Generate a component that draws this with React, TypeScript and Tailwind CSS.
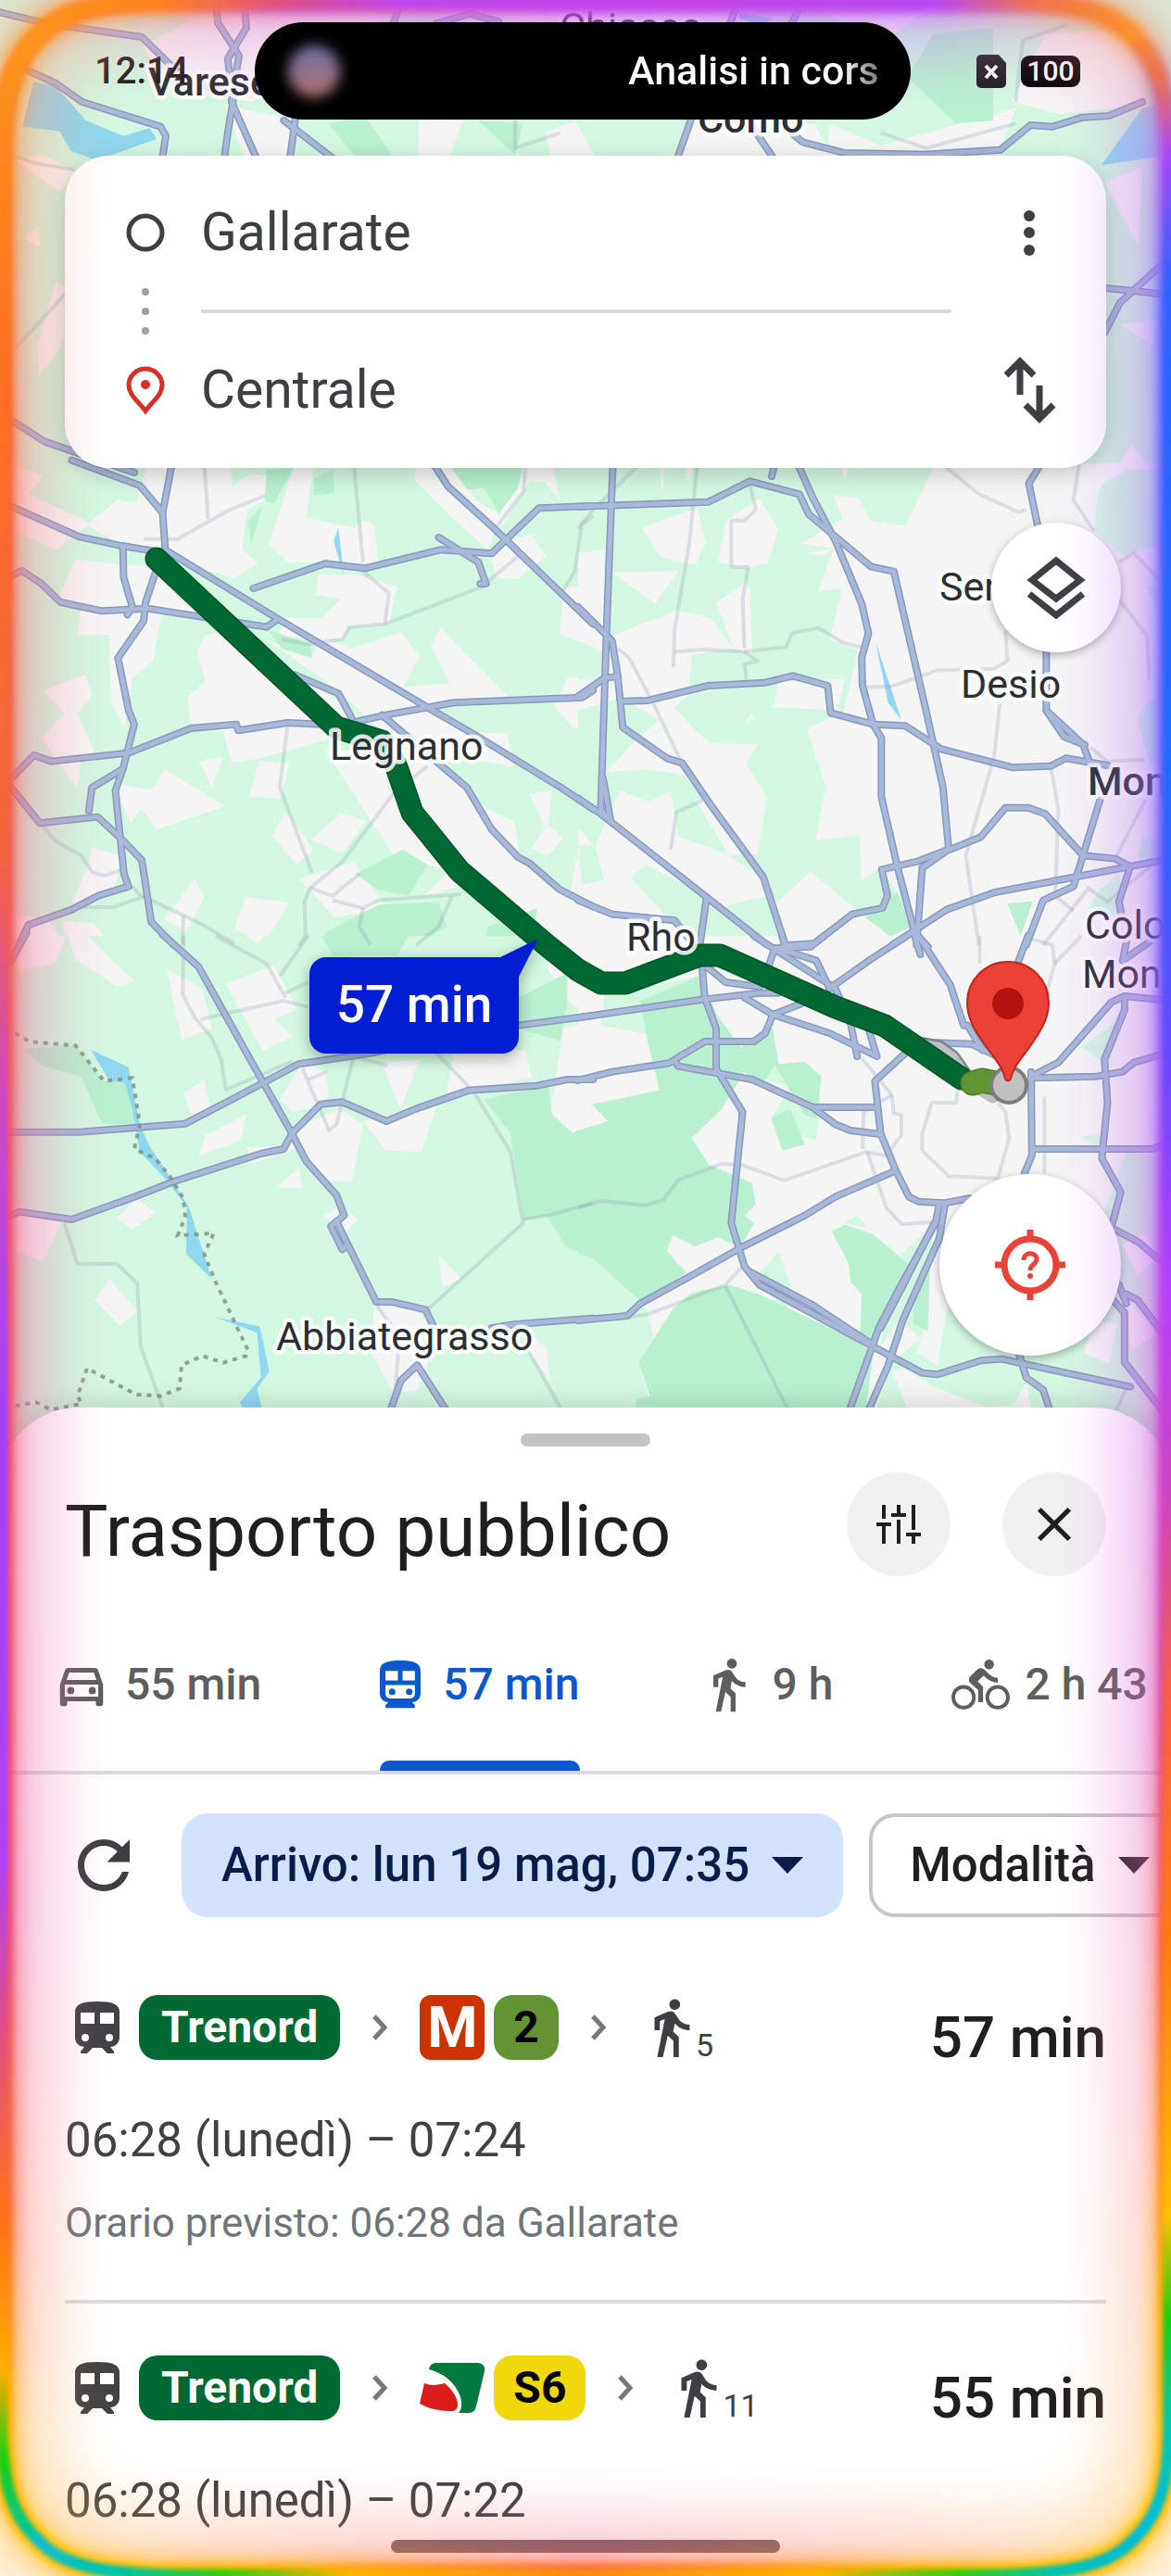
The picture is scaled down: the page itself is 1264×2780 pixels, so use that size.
import React from 'react';
import { MdClose, MdDirectionsBike, MdDirectionsWalk, MdOutlineDirectionsCar, MdRefresh } from 'react-icons/md';

interface MapTile {
  transform: string;
  base: string;
  light: string[];
  gaps: string[];
  dark: string[];
  water: string[];
  roads: string[];
  streets: string[];
}

// Each tile keeps its own grid, so shapes are written in tile units
const TILES: MapTile[] = [
  {
    transform: 'translate(0 0) scale(0.806 0.3333)',
    base: '#d2f8e1',
    light: [],
    gaps: [
      '190,150 285,30 560,30 400,160 340,330 230,290',
      '560,0 1000,0 980,90 600,90',
      '300,340 400,390 380,520 330,520',
      '1090,20 1250,20 1180,140',
      '1400,110 1540,90 1530,340 1420,370 1355,330',
      '920,390 1090,400 1120,520 900,520',
      '1110,400 1180,470 1360,350 1340,480 1250,520 1110,520',
      '560,380 620,390 600,520 560,520',
      '730,430 770,390 800,520 740,520',
      '30,770 52,735 54,800',
      '50,1120 75,910 95,940 95,1060 72,1160 52,1210',
      '20,520 60,500 100,560 80,620',
      '1480,590 1530,540 1525,800 1485,620',
      '1500,1050 1550,1035 1545,1120',
      '1500,1500 1515,1440 1540,1510',
    ],
    dark: ['1250,110 1330,90 1330,390 1280,400 1215,250', '440,400 490,380 530,520 480,520', '640,390 700,400 690,500'],
    water: [
      '45,265 75,280 115,390 165,440 200,415 210,450 130,518 95,490 80,425 30,410',
      '1570,330 1530,350 1475,535 1570,500',
      '990,40 1035,60 1020,80 990,60',
    ],
    roads: [
      '0,40 60,75 190,120 245,250 300,300',
      '30,220 75,270 110,330 215,410 222,440 217,520',
      '290,30 292,75 320,180 310,330 345,520',
      '328,30 330,90 305,190 312,330 305,430 300,520',
      '380,390 450,520',
      '395,390 388,520',
      '925,390 906,520',
      '1010,420 1038,520',
      '1060,430 1075,460 1130,495 1240,500 1340,485 1380,405 1410,410 1450,380 1485,375 1530,330',
      '585,75 630,45 668,70',
      '527,75 533,30',
      '978,75 985,30',
      '1060,75 1070,30',
      '1568,830 1500,980 1480,1075',
      '1470,930 1568,955',
      '15,1360 60,1430 180,1530',
    ],
    streets: ['0,490 50,530 100,550', '20,1130 88,950', '690,390 690,480 750,430', '1180,430 1240,480 1360,400', '1360,330 1370,130 1430,80'],
  },
  {
    transform: 'translate(0 500) scale(0.4082 0.3333)',
    base: '#d2f8e1',
    light: [],
    gaps: [
      '310,118 360,128 390,0 610,0 615,75 660,35 705,40 700,120 655,150 640,275 682,325 620,372 500,330 430,280 320,260 225,200',
      '205,555 215,460 150,450 200,310 330,330 430,330 560,480 520,500 430,470 405,640 350,695 330,855 293,775 288,555',
      '540,560 620,520 800,690 870,750 900,770 960,830 930,880 850,900 690,955 612,970 590,870 503,840 497,755 543,705 520,610',
      '700,570 820,630 850,560 930,600 1060,545 1110,625 1065,725 1190,710 1140,590 1165,532 1345,755 1200,765 1130,800 1240,870 1340,875 1360,985 1260,960 1150,970 1020,880 900,740 740,600',
      '780,0 830,0 810,175 935,210 960,185 990,200 1000,330 850,320 760,320 710,265',
      '840,360 940,360 1050,400 1030,520 920,530 910,570 740,560 745,500 850,500 900,440 835,425',
      '1100,0 1190,0 1260,120 1340,180 1310,220 1290,280 1180,160 1095,50',
      '1385,0 1460,0 1480,120 1440,60 1400,60 1330,200 1305,215',
      '1340,250 1405,230 1445,300 1370,375 1310,370 1300,300',
      '1490,400 1568,400 1568,600 1480,550',
      '1500,695 1568,690 1568,840 1520,860 1465,790',
      '860,930 1060,930 1180,970 1260,1100 1360,1160 1375,1270 1400,1310 1568,1440 1568,1560 1430,1560 1220,1370 1120,1400 1190,1320 1040,1270 945,1090',
      '115,735 225,685 245,750 205,810 250,935 215,945 205,1050 160,980 110,890 170,810',
      '525,965 590,952 560,1048',
      '685,962 765,970 740,1088 658,1078',
      '300,1035 400,1058 435,990 595,1110 415,1185 375,1120 345,1165',
      '755,1130 830,1250 785,1300 718,1205',
      '900,1135 970,1155 905,1262 822,1218',
      '245,1243 320,1270 300,1400 190,1425 230,1310',
      '515,1345 540,1410 490,1520 435,1475',
      '650,1403 765,1422 700,1553 620,1508',
      '790,1345 935,1290 1022,1440 885,1470',
      '1400,1070 1460,1058 1450,1170 1490,1215 1445,1275 1405,1245 1440,1180',
      '1525,1270 1540,1370 1505,1410',
      '30,0 115,40 75,100 240,195 145,282 0,190',
      '0,1450 130,1480 170,1560 0,1560',
      '165,1480 250,1490 290,1560 180,1560',
    ],
    dark: [
      '1185,0 1385,0 1370,80 1320,160 1280,80 1235,85',
      '705,20 775,15 725,130 700,120',
      '655,190 695,135 665,260',
      '830,50 880,20 885,95 830,105',
      '710,540 820,585 825,630 745,600',
      '940,1330 1065,1250 1130,1300 1080,1400 1000,1380',
      '860,1520 1000,1430 1160,1420 1180,1500 1100,1560 870,1560',
      '1290,1500 1420,1440 1410,1560 1280,1560',
    ],
    water: ['895,210 905,315 908,360 882,250'],
    roads: [
      '190,-10 370,72 430,160',
      '455,0 430,160 437,280 730,500 1130,790 1270,890 1490,1055 1568,1120',
      '30,140 210,238 325,268 437,290',
      '325,268 327,370 350,465 337,490',
      '412,350 385,450 380,510 312,630 340,800 355,845 325,990 305,1060 318,1215 328,1330 340,1370 260,1400 190,1445 75,1495 50,1560',
      '30,365 58,348 110,390 160,450 270,478 390,470 705,530 735,505',
      '30,1020 90,945 135,965 340,938 505,858 625,845 630,865 760,840 900,848 1020,815 1200,775 1540,758 1568,735',
      '30,1050 105,1165 258,1145 320,1215 375,1285 400,1485 460,1560',
      '325,990 243,1050 235,1125',
      '670,405 860,325 965,340 1165,280 1300,292 1425,145 1568,138',
      '1160,240 1265,320 1285,390 1270,390',
      '1145,0 1185,75 1310,215 1530,475 1568,520',
      '780,685 895,745 930,825',
      '1010,815 1235,1050 1300,1185 1370,1275 1400,1295 1480,1380 1568,1435',
    ],
    streets: [
      '540,0 550,180',
      '380,245 470,245 600,155 700,105',
      '935,0 960,320',
      '960,350 1028,420 1018,520 925,530 905,570 815,585 745,570',
      '1018,520 1275,400 1370,300',
      '1390,0 1385,90 1310,210',
      '1568,170 1538,200 1520,350 1480,430',
      '760,850 740,1050 825,1325',
      '1130,980 1040,1070 905,1290 820,1375 805,1420 808,1530 790,1560',
      '820,1375 880,1400 950,1330',
      '105,1165 150,1225 215,1270 245,1325 275,1335 325,1315',
      '215,1437 300,1437 375,1405 350,1370',
      '375,1400 530,1490 620,1555',
      '485,1465 483,1560',
      '880,1415 960,1440 1000,1415 1220,1395',
      '960,1440 950,1500 980,1560',
      '1195,1400 1160,1500 1100,1560',
    ],
  },
  {
    transform: 'translate(624 500) scale(0.4082 0.3333)',
    base: '#f5f5f5',
    light: [
      '0,0 640,0 700,180 590,260 675,275 635,415 698,405 665,570 740,605 700,815 645,720 530,700 520,780 475,850 445,770 290,750 300,620 410,600 350,500 265,475 85,560 0,480',
      '600,0 945,0 865,203 775,185 740,110 680,105',
      '0,575 70,610 60,700 0,700',
      '0,800 110,760 215,830 150,900 75,1000 180,990 280,1010 335,1090 245,1060 190,1095 110,1060 45,1240 0,1180',
      '350,905 430,850 520,790 700,800 605,860 655,1045 628,1220 745,1205 748,1350 800,1310 850,1400 880,1500 830,1530 750,1460 615,1320 520,1430 560,1560 340,1560 400,1430 360,1380 480,1340 400,1270 475,1265 500,1080 445,975 475,910',
      '255,790 300,740 480,770 430,860 350,905 310,865',
      '180,1000 280,1020 340,1150 400,1270 340,1240 265,1210 245,1060',
      '0,1235 45,1240 70,1350 10,1362',
      '140,1340 180,1300 340,1400 480,1560 300,1560',
      '1385,70 1450,20 1568,20 1568,250 1440,300 1365,215 1375,100',
      '1500,780 1568,740 1568,960 1510,975 1480,830',
      '1380,1380 1430,1330 1450,1450 1330,1480',
      '1490,1210 1568,1230 1568,1290 1480,1280',
      '1500,400 1568,380 1568,480 1520,440',
    ],
    gaps: [
      '168,208 315,145 338,260 310,328 220,305',
      '390,185 480,115 530,215 500,325 450,340 370,320',
      '90,353 268,348 203,455',
      '365,450 440,385 455,410 460,620 410,600',
      '0,290 70,280 65,550 0,480',
      '215,0 230,0 222,95',
      '280,0 310,0 290,60',
      '690,0 720,0 705,55',
      '620,700 705,700 690,780 665,780',
      '600,290 675,275 650,300',
      '350,1385 480,1340 500,1400 400,1430',
    ],
    dark: ['760,1470 845,1390 880,1500 825,1532', '1135,1425 1203,1418 1170,1530', '1105,1540 1190,1530 1160,1560'],
    water: ['787,580 825,720 855,832 820,775'],
    roads: [
      '92,0 75,550 60,1120 80,1150',
      '66,1020 85,1150',
      '0,140 345,125 455,58 585,100 610,165 775,335 835,350 920,800 965,1050 980,1250 910,1310 895,1560',
      '580,0 620,110 680,250 750,455 768,550 750,630 752,720 780,845 802,890 802,1080 845,1310 890,1520 925,1565',
      '520,0 512,42',
      '0,465 90,575 105,690 118,855 235,955 275,970 350,1105 490,1340 548,1560',
      '0,755 70,695 105,690',
      '118,770 185,768 345,720 495,710 568,688 660,720 668,808 780,845 865,850 935,905 960,925 1150,985 1250,980 1290,955 1400,978',
      '1225,0 1192,65 1215,200',
      '1238,600 1238,800 1335,910 1355,975',
      '1238,800 1285,885 1340,912',
      '1380,1090 1335,1270 1310,1370 1230,1415 1185,1560',
      '0,1085 60,1135 335,1400 500,1560',
      '340,1405 322,1560',
      '0,1415 90,1460 255,1480 300,1550',
      '830,1560 975,1445 1100,1390 1460,1305 1568,1280',
      '985,1250 1065,1210 1130,1115 1190,1115 1235,1135 1335,1270 1420,1280 1460,1305 1430,1420 1440,1480',
      '980,1250 895,1290 803,1315 818,1400 805,1440 725,1460 625,1555 555,1560',
    ],
    streets: [
      '315,0 295,250 255,540 252,660',
      '455,70 470,150 440,185 405,185 405,335 450,335 435,440 440,600',
      '255,610 330,603 440,610 550,595 565,550 635,533 700,580 760,600',
      '440,610 475,640 440,650 445,700',
      '0,210 40,150 165,0',
      '105,600 135,630 200,780 270,960',
      '760,725 830,722 950,670 1100,665 1135,640 1130,540',
      '1115,780 1100,950 1025,1270 1060,1560',
      '1250,980 1270,1120 1262,1400 1310,1450',
      '960,0 1060,100 1165,158 1185,150',
      '1325,0 1310,120 1365,220',
      '1430,440 1505,560 1510,700',
      '1500,1090 1420,1280',
      '340,1085 260,1130 245,1250',
      '1230,1560 1350,1375 1400,1420 1568,1250',
      '1430,320 1470,290 1568,420',
      '1355,920 1400,965 1500,960',
    ],
  },
  {
    transform: 'translate(0 1010) scale(0.4082 0.3333)',
    base: '#d2f8e1',
    light: [],
    gaps: [
      '440,108 535,170 560,300 480,337',
      '597,155 725,95 785,240 725,270 775,325 695,373',
      '485,510 540,465 555,550 510,590',
      '525,712 545,645 652,577 635,665',
      '650,685 740,680 820,600 900,560 960,610 930,800 870,790 780,690 670,735',
      '960,600 1020,585 1160,530 1115,700 1020,695',
      '740,530 800,410 860,440 870,510 855,550 775,570',
      '730,815 790,750 800,815',
      '350,950 310,915 360,850 412,895',
      '290,1110 365,1215 317,1262 250,1180',
      '855,905 900,870 945,915 910,970',
      '1160,1035 1220,1110 1170,1140',
      '990,1195 1100,1210 1140,1270 1130,1400 1100,1475 1040,1475 980,1350',
      '1390,1290 1445,1330 1455,1440 1400,1350',
      '1010,410 1110,400 1060,560 1040,510',
      '1180,510 1200,375 1390,370 1405,460 1240,500',
      '1490,300 1568,280 1568,600 1515,638 1455,570',
      '1440,0 1568,0 1568,260 1500,210 1450,110',
      '180,0 230,0 355,145 310,165 200,75',
      '40,0 175,0 145,90 50,110',
      '650,0 700,0 680,25',
      '915,35 1020,45 1050,68 920,68',
      '0,850 160,930 115,1055 30,1010',
    ],
    dark: [
      '850,0 1080,0 1050,65 880,65',
      '1370,200 1500,120 1500,220 1480,340 1370,300',
      '1280,530 1450,480 1460,580 1515,640 1568,600 1568,1045 1495,1005 1445,905 1385,920 1350,640',
      '60,365 200,355 275,470 345,475 365,610 270,610 215,455 110,420',
    ],
    water: [
      '240,368 340,425 355,520 370,610 395,680 455,790 500,880 560,1110 492,1030 495,880 440,790 370,700 350,560 330,475 290,470',
      '565,1233 687,1265 712,1410 680,1465 692,1530 640,1530 635,1510 690,1430 680,1285',
    ],
    roads: [
      '430,-5 525,100 680,440 772,640 810,730 890,840 910,905 890,925 920,1000 995,1185 1035,1185 1125,1210 1145,1260',
      '890,925 875,940 905,1015 920,1000',
      '30,635 210,635 490,608 690,480 790,415 980,380 1130,340 1370,290 1568,258',
      '30,905 50,893 190,918 360,843 460,795 690,705 750,690 772,640 848,545 905,538 1022,600 1100,560 1240,500 1420,485 1500,465 1568,465',
      '70,-10 30,80',
      '1300,1270 1360,1258 1568,1238',
      '1185,1545 1103,1390 1060,1440 1030,1545',
    ],
    streets: [
      '485,0 483,190 515,265 560,330 585,400 597,498 775,405',
      '570,0 705,90 755,200',
      '815,0 740,130',
      '530,270 750,210 815,230',
      '755,185 815,150',
      '1150,375 1250,500 1350,700 1383,930 1135,1205',
      '1385,918 1450,905 1568,865',
      '170,930 205,1062 310,1062 363,1125 372,1330 435,1545',
      '995,1195 1035,1260',
      '1053,1350 1040,1545',
      '1395,1340 1490,1545',
      '800,430 870,630 890,610 935,390 1025,420',
      '815,465 865,440',
    ],
  },
  {
    transform: 'translate(624 1010) scale(0.4082 0.3333)',
    base: '#f5f5f5',
    light: [
      '70,190 160,170 320,130 370,260 250,310 190,320 60,290',
      '430,360 515,300 530,415 600,408 643,455 630,660 560,640 510,590 560,490 440,440',
      '0,1030 40,1045 180,1205 200,1300 160,1380 190,1510 150,1800 0,1800',
      '470,1110 530,1020 560,1130 550,1220',
      '700,930 740,905 765,945',
      '830,1060 900,980 940,940 910,1310 850,1240 800,1330',
      '790,1530 830,1380 900,1310 945,1390 980,1180 1060,1290 1200,1360 1330,1310 1380,1250 1390,900 1450,700 1568,720 1568,1800 1200,1530 1185,1450 1150,1520 1080,1525 940,1460 860,1400 830,1410 870,1530',
      '1330,360 1400,300 1420,270 1410,430',
      '1330,650 1400,640 1370,680',
    ],
    gaps: [
      '1370,1250 1425,1255 1405,1385 1335,1350',
      '1450,1170 1530,1290 1460,1340',
      '1440,1000 1500,960 1530,1040 1480,1100',
      '895,1350 940,1180 980,1180 950,1390',
    ],
    dark: [
      '165,210 320,130 370,260 430,360 515,300 530,415 600,408 643,455 630,590 600,580 560,500 520,420 480,490 440,440 380,560 300,655 345,740 460,800 470,870 440,905 465,930 430,1010 370,975 310,1005 250,970 235,1020 285,1090 170,1190 40,1045 0,1030 0,630 80,600 35,545 215,500 180,320',
      '510,590 560,560 600,675 540,695',
      '160,1380 250,1210 300,1155 400,1130 480,1160 580,1220 720,1300 780,1350 760,1545 150,1545 155,1500 190,1490',
      '670,955 705,935 780,965 890,1080 820,1200 770,1340 745,1300 750,1160 720,1120 715,1060',
      '890,1170 930,1080 925,1280 885,1255',
    ],
    water: [],
    roads: [
      '328,100 335,200 365,300 365,430 435,570 405,930 440,1070 480,1130 780,1330 910,1415 950,1420 1065,1375 1120,1370 1460,1460',
      '450,1085 620,1195 780,1325',
      '0,265 335,205 480,185 530,185',
      '340,100 390,150 480,165',
      '0,468 90,440 210,418 240,412 335,342 465,342 495,315 515,255 590,220',
      '255,405 265,422 460,465 620,555 790,555',
      '620,555 680,610 720,630 800,642',
      '440,200 515,255 665,315 790,390 770,310',
      '465,0 680,170 720,280 738,390',
      '520,40 495,130',
      '520,40 615,35 650,0',
      '540,0 545,30',
      '540,45 630,80 665,170',
      '665,170 775,75 870,0',
      '890,0 905,60',
      '900,0 985,160 995,200 1020,290',
      '930,345 1040,350 1100,385',
      '1190,0 1165,80',
      '1030,290 1070,370',
      '870,375 785,470 800,640 840,760 875,845 900,860 970,865 1035,850',
      '840,760 680,845 600,905 430,1010 300,1100 165,1190 130,1230 0,1245',
      '1198,440 1200,710 1180,770',
      '1198,455 1270,410 1360,285 1410,215 1445,195 1568,210',
      '1200,460 1370,455 1440,440 1470,410 1568,375',
      '1200,690 1385,690 1520,690 1568,665',
      '1445,195 1445,240 1392,400 1400,540 1385,720 1435,830 1410,945 1480,990 1568,1080',
      '955,870 945,930 850,1140 795,1270 715,1545',
      '940,935 860,1130 800,1270',
      '970,870 955,980 860,1240 820,1390 765,1545',
      '1430,1130 1450,1190',
      '1415,1180 1445,1220 1445,1380 1560,1560',
      '1450,1160 1480,1180 1560,1310',
      '1165,1350 1185,1430 1230,1470 1250,1545',
      '1510,20 1440,80 1450,20',
    ],
    streets: [
      '0,880 60,858 180,872 225,855 265,790 380,738 430,740 545,792 760,700 815,712 855,645 855,580 835,575 830,515 750,395',
      '1005,480 1000,540 935,540 910,640 910,695 980,778 1110,785 1140,655 1130,570 1110,540',
      '765,700 815,880 855,933 950,925',
      '752,690 755,570 830,515',
      '1233,520 1233,770',
      '390,1135 560,1545',
      '130,1235 185,1225 390,1130 430,1075',
      '1062,0 1062,90',
      '1200,10 1255,30 1260,90 1240,180 1215,330',
      '1330,0 1260,90',
      '1455,1450 1420,1545',
    ],
  },
];

const BORDER_LINE =
  '40,315 80,343 200,355 275,470 350,460 370,610 355,690 410,720 450,780 485,850 490,910 470,970 565,963 540,1030 570,1120 655,1340 650,1360 590,1382 535,1360 480,1390 475,1465 425,1490 360,1485 230,1400 205,1490 215,1515 135,1535 95,1510 40,1522';

const ROUTE = '169,603 363,785 412,800 427,825 445,877 496,940 590,1020 624,1047 649,1061 675,1061 755,1031 777,1031 902,1087 955,1107 1038,1164';

const LABELS = [
  { text: 'Varese', x: 160, y: 103, weight: 500 },
  { text: 'Chiasso', x: 604, y: 44, weight: 400 },
  { text: 'Como', x: 753, y: 143, weight: 500 },
  { text: 'Seregno', x: 1014, y: 648, weight: 400 },
  { text: 'Desio', x: 1037, y: 753, weight: 400 },
  { text: 'Monza', x: 1174, y: 858, weight: 500 },
  { text: 'Cologno', x: 1171, y: 1013, weight: 400 },
  { text: 'Monzese', x: 1168, y: 1066, weight: 400 },
  { text: 'Legnano', x: 356, y: 820, weight: 400 },
  { text: 'Rho', x: 676, y: 1026, weight: 400 },
  { text: 'Abbiategrasso', x: 298, y: 1457, weight: 400 },
];

const TransitMap: React.FC = () => (
  <svg className="absolute inset-x-0 top-0 w-full" viewBox="0 0 1264 1620" aria-label="Mappa del percorso">
    <rect width="1264" height="1620" fill="#d2f8e1" />
    {TILES.map((tile) => (
      <g key={tile.transform} transform={tile.transform}>
        <rect width="1568" height="1830" fill={tile.base} />
        {tile.light.map((p) => <polygon key={p} points={p} fill="#d2f8e1" />)}
        {tile.gaps.map((p) => <polygon key={p} points={p} fill="#f5f5f5" />)}
        {tile.dark.map((p) => <polygon key={p} points={p} fill="#b8f0d0" />)}
        {tile.water.map((p) => <polygon key={p} points={p} fill="#8fd8f0" />)}
      </g>
    ))}
    {TILES.map((tile) => (
      <g key={tile.transform} transform={tile.transform} fill="none" stroke="#8a96b0" strokeOpacity="0.25" strokeWidth="4" strokeLinejoin="round">
        {tile.streets.map((p) => <polyline key={p} points={p} vectorEffect="non-scaling-stroke" />)}
      </g>
    ))}
    {TILES.map((tile) => (
      <g key={tile.transform} transform={tile.transform} fill="none" stroke="#8799bd" strokeWidth="8" strokeLinejoin="round" strokeLinecap="round">
        {tile.roads.map((p) => <polyline key={p} points={p} vectorEffect="non-scaling-stroke" />)}
      </g>
    ))}
    {TILES.map((tile) => (
      <g key={tile.transform} transform={tile.transform} fill="none" stroke="#a8b8d8" strokeWidth="5" strokeLinejoin="round" strokeLinecap="round">
        {tile.roads.map((p) => <polyline key={p} points={p} vectorEffect="non-scaling-stroke" />)}
      </g>
    ))}
    <g transform="translate(0 1010) scale(0.4082 0.3333)">
      <polyline points={BORDER_LINE} fill="none" stroke="#7d8c86" strokeOpacity="0.8" strokeWidth="4" strokeDasharray="5 6" vectorEffect="non-scaling-stroke" />
    </g>

    <polyline points="995,1130 1012,1133 1026,1143 1038,1160" fill="none" stroke="#7f8387" strokeWidth="22" strokeLinecap="round" strokeLinejoin="round" />
    <polyline points="995,1130 1012,1133 1026,1143 1038,1160 1072,1182" fill="none" stroke="#bdc1c6" strokeWidth="17" strokeLinecap="round" strokeLinejoin="round" />
    <polyline points={ROUTE} fill="none" stroke="#00552a" strokeWidth="25" strokeLinecap="round" strokeLinejoin="round" />
    <polyline points={ROUTE} fill="none" stroke="#006833" strokeWidth="22" strokeLinecap="round" strokeLinejoin="round" />
    <polyline points="1050,1169 1060,1166 1080,1170" fill="none" stroke="#4f8029" strokeWidth="27" strokeLinecap="round" strokeLinejoin="round" />
    <polyline points="1050,1169 1060,1166 1080,1170" fill="none" stroke="#5f9632" strokeWidth="24" strokeLinecap="round" strokeLinejoin="round" />
    <circle cx="1089" cy="1171" r="19" fill="#c0c0c0" stroke="#7d7d7d" strokeWidth="4" />

    <g className="font-[Roboto,sans-serif] text-[43px]" fill="#2b2f33" stroke="#fff" strokeOpacity="0.85" strokeWidth="9" strokeLinejoin="round" paintOrder="stroke">
      {LABELS.map((l) => (
        <text key={l.text} x={l.x} y={l.y} fontWeight={l.weight}>{l.text}</text>
      ))}
    </g>

    <path
      d="M1088 1038c-25 0-44 20-44 44 0 18 9 31 20 47 11 15 19 24 21 35 1 3 5 3 6 0 2-11 10-20 21-35 11-16 20-29 20-47 0-24-19-44-44-44z"
      fill="#ea4335"
      stroke="#c5221f"
      strokeWidth="2"
    />
    <circle cx="1088" cy="1083" r="17" fill="#b31412" />

    <g className="drop-shadow-[0_5px_8px_rgba(0,0,0,0.3)]">
      <path d="M352 1033H540L581 1013L560 1054V1119a18 18 0 0 1-18 18H352a18 18 0 0 1-18-18V1051a18 18 0 0 1 18-18z" fill="#041ed4" />
    </g>
    <text className="font-[Roboto,sans-serif] text-[55px]" x="447" y="1103" fill="#fff" fontWeight="500" textAnchor="middle">57 min</text>
  </svg>
);

const GLOW_SIDES = [
  { id: 'left', d: 'M42 38C14 66 3 100 2 170V2620C3 2680 12 2714 42 2742' },
  { id: 'right', d: 'M1222 38C1250 66 1261 100 1262 170V2620C1261 2680 1252 2714 1222 2742' },
  { id: 'top', d: 'M42 38C66 14 100 3 170 2H1094C1164 3 1198 14 1222 38' },
  { id: 'bottom', d: 'M42 2742C66 2768 110 2778 190 2779H1074C1154 2778 1198 2768 1222 2742' },
];

const GLOW_STOPS: Record<string, [number, string][]> = {
  left: [[0, '#ff9a1a'], [0.15, '#ff6f22'], [0.33, '#f2643c'], [0.42, '#d04ac0'], [0.55, '#a341ff'], [0.72, '#b040ff'], [0.79, '#e05080'], [0.86, '#ff7018'], [0.92, '#ffae00'], [0.955, '#18d010'], [0.985, '#00c4a8'], [1, '#10bce0']],
  right: [[0, '#ffa020'], [0.03, '#f07050'], [0.06, '#a848f8'], [0.11, '#2f62ff'], [0.3, '#1f6aff'], [0.41, '#6a48ff'], [0.5, '#b640ff'], [0.58, '#cc45c0'], [0.66, '#f85e44'], [0.75, '#ff7a10'], [0.86, '#ffc000'], [0.9, '#18d010'], [0.94, '#00c8b0'], [1, '#00b8e8']],
  top: [[0, '#ff9a1a'], [0.14, '#ff8020'], [0.24, '#e05080'], [0.34, '#c046f0'], [0.6, '#c444e8'], [0.8, '#b848f0'], [0.88, '#f07050'], [1, '#ffa020']],
  bottom: [[0, '#10bce0'], [0.1, '#00c4a8'], [0.19, '#30cc10'], [0.3, '#ffb400'], [0.5, '#ff8a10'], [0.7, '#ffb400'], [0.82, '#30cc10'], [0.9, '#00c4b0'], [1, '#00b8e8']],
};

const RIM_STOPS: Record<string, [number, string][]> = {
  left: [[0, '#ff9018'], [0.18, '#ff5e28'], [0.45, '#f05060'], [0.75, '#ec4a70'], [0.86, '#ff6a28'], [0.93, '#ffa800'], [1, '#ffc400']],
  right: [[0, '#ffa020'], [0.06, '#b060f0'], [0.12, '#6a6cff'], [0.36, '#7460ff'], [0.5, '#c044f0'], [0.66, '#e0489c'], [0.76, '#fb6440'], [0.88, '#ffa400'], [1, '#ffc400']],
  top: [[0, '#ff9018'], [0.14, '#ff8030'], [0.24, '#d858b0'], [0.5, '#c450ec'], [0.8, '#bc58f0'], [0.9, '#f08060'], [1, '#ffa020']],
  bottom: [[0, '#ffc400'], [0.22, '#ffb400'], [0.5, '#ff6a38'], [0.78, '#ffb400'], [1, '#ffc400']],
};

const HALO_STOPS: Record<string, [number, string][]> = {
  left: [[0, '#ff9a60'], [0.15, '#f08080'], [0.4, '#ec6aa0'], [0.75, '#ea68a8'], [0.88, '#ff8070'], [0.95, '#ffae40'], [1, '#ffb830']],
  right: [[0, '#ffa080'], [0.06, '#c070f0'], [0.3, '#b070f8'], [0.5, '#c860f0'], [0.68, '#e060c8'], [0.82, '#ff88a0'], [0.95, '#ffb860'], [1, '#ffc040']],
  top: [[0, '#ffa070'], [0.2, '#e080d0'], [0.5, '#cc60f0'], [0.8, '#c070f0'], [1, '#ffa080']],
  bottom: [[0, '#ffb830'], [0.2, '#ff9060'], [0.5, '#f06080'], [0.8, '#ff9060'], [1, '#ffc040']],
};

const GRADIENTS = [
  { name: 'glow', stops: GLOW_STOPS },
  { name: 'rim', stops: RIM_STOPS },
  { name: 'halo', stops: HALO_STOPS },
];

// Widest and softest layer first
const GLOW_LAYERS = [
  { name: 'halo', blur: 34, width: 104, opacity: 0.44 },
  { name: 'rim', blur: 10, width: 34, opacity: 0.6 },
  { name: 'rim', blur: 3, width: 24, opacity: 0.9 },
  { name: 'glow', blur: 2, width: 13, opacity: 1 },
];

const EdgeGlow: React.FC = () => (
  <svg className="pointer-events-none absolute inset-0 h-full w-full" viewBox="0 0 1264 2780" preserveAspectRatio="none" aria-hidden="true">
    <defs>
      {GLOW_SIDES.map(({ id }) => {
        const vertical = id === 'left' || id === 'right';
        const axis = vertical ? { x1: 0, y1: 0, x2: 0, y2: 2780 } : { x1: 0, y1: 0, x2: 1264, y2: 0 };
        return GRADIENTS.map(({ name, stops }) => (
          <linearGradient key={`${name}-${id}`} id={`${name}-${id}`} gradientUnits="userSpaceOnUse" {...axis}>
            {stops[id].map(([offset, color]) => <stop key={offset} offset={offset} stopColor={color} />)}
          </linearGradient>
        ));
      })}
      {GLOW_LAYERS.map(({ blur }) => (
        <filter key={blur} id={`blur-${blur}`} filterUnits="userSpaceOnUse" x="-100" y="-100" width="1464" height="2980">
          <feGaussianBlur stdDeviation={blur} />
        </filter>
      ))}
    </defs>
    {GLOW_LAYERS.map(({ name, blur, width, opacity }) => (
      <g key={blur} filter={`url(#blur-${blur})`} opacity={opacity} strokeWidth={width} fill="none" strokeLinecap="round">
        {GLOW_SIDES.map(({ id, d }) => <path key={id} d={d} stroke={`url(#${name}-${id})`} />)}
      </g>
    ))}
  </svg>
);

const StatusBar: React.FC = () => (
  <div className="flex h-[105px] items-center justify-between pr-[98px] pl-[102px]">
    <span className="text-[40px] font-medium text-[#1a1a1a]">12:14</span>
    <div className="relative z-10 flex h-full w-[708px] items-center justify-between rounded-full bg-black pr-[34px] pl-9">
      <span className="h-14 w-14 rounded-full bg-linear-to-b from-[#6d6fa8] to-[#b0706a] blur-[7px]" />
      <span className="bg-linear-to-r from-white from-85% to-[#777] bg-clip-text text-[43px] font-medium text-transparent">Analisi in cors</span>
    </div>
    <div className="flex items-center gap-4">
      <svg className="w-[32px]" viewBox="0 0 32 36" aria-label="Nessuna SIM">
        <path d="M5 0h19l8 9v22a5 5 0 0 1-5 5H5a5 5 0 0 1-5-5V5a5 5 0 0 1 5-5z" fill="#1f1f1f" />
        <path d="M10 12l12 13M22 12l-12 13" stroke="#fff" strokeWidth="4" />
      </svg>
      <span className="flex h-[34px] w-[64px] items-center justify-center rounded-[9px] bg-black text-[30px] font-medium text-white">100</span>
    </div>
  </div>
);

const DirectionsCard: React.FC = () => (
  <form className="mx-[70px] mt-[39px] rounded-[48px] bg-white pt-[41px] pr-[51px] pb-[42px] pl-[65px] shadow-[0_6px_24px_rgba(0,0,0,0.2)]">
    <div className="flex h-[84px] items-center">
      <svg className="w-11 shrink-0" viewBox="0 0 44 44" aria-hidden="true"><circle cx="22" cy="22" r="18" fill="none" stroke="#3c4043" strokeWidth="5" /></svg>
      <input aria-label="Partenza" defaultValue="Gallarate" className="ml-[38px] h-[84px] min-w-0 flex-1 text-[57px] text-[#3c4043] outline-none" />
      <button type="button" aria-label="Altre opzioni" className="w-16">
        <svg viewBox="0 0 64 64" fill="#3c4043"><circle cx="32" cy="14" r="6" /><circle cx="32" cy="32" r="6" /><circle cx="32" cy="51" r="6" /></svg>
      </button>
    </div>
    <div className="flex h-[86px] items-center">
      <svg className="w-11 shrink-0" viewBox="0 0 44 60" fill="#9aa0a6" aria-hidden="true"><circle cx="22" cy="9" r="4" /><circle cx="22" cy="30" r="4" /><circle cx="22" cy="51" r="4" /></svg>
      <div className="mr-[116px] ml-[38px] h-1 flex-1 bg-[#dadada]" />
    </div>
    <div className="flex h-[84px] items-center">
      <svg className="w-11 shrink-0" viewBox="0 0 44 54" aria-hidden="true">
        <path d="M22 4C12 4 4 12 4 21.500c0 11 10 17 18 28 8-11 18-17 18-28C40 12 32 4 22 4z" fill="none" stroke="#d93025" strokeWidth="5" />
        <circle cx="22" cy="21" r="5" fill="#d93025" />
      </svg>
      <input aria-label="Destinazione" defaultValue="Centrale" className="ml-[38px] h-[84px] min-w-0 flex-1 text-[57px] text-[#3c4043] outline-none" />
      <button type="button" aria-label="Inverti" className="w-16">
        <svg viewBox="0 0 64 72" fill="none" stroke="#3c4043" strokeWidth="7">
          <path d="M22 41V7M7 20L22 5l15 15" />
          <path d="M43 31v34M28 52l15 15 15-15" />
        </svg>
      </button>
    </div>
  </form>
);

const TransitTabIcon: React.FC = () => (
  <svg className="w-[44px]" viewBox="0 0 43 50" aria-hidden="true">
    <path d="M21.500 0C8 0 0 2 0 11v24c0 5 4 9 9 9l-3 3v3h31v-3l-3-3c5 0 9-4 9-9V11C43 2 35 0 21.500 0z" fill="#0b57d0" />
    <path d="M6 11h13v10H6zM24 11h13v10H24z" fill="#fff" />
    <path d="M6 26h31v9c0 3-2 5-5 5H11c-3 0-5-2-5-5z" fill="#fff" />
    <circle cx="13" cy="33" r="3.500" fill="#0b57d0" />
    <circle cx="31" cy="33" r="3.500" fill="#0b57d0" />
  </svg>
);

const TrainIcon: React.FC = () => (
  <svg className="mr-[21px] w-12" viewBox="0 0 48 56" aria-hidden="true">
    <path d="M24 0C8 0 0 3 0 11v28c0 6 5 10 10 10l-4 5v2h7l6-6h10l6 6h7v-2l-4-5c5 0 10-4 10-10V11C48 3 40 0 24 0z" fill="#414246" />
    <path d="M6 12h15v12H6zM27 12h15v12H27z" fill="#fff" />
    <circle cx="11" cy="39" r="4" fill="#fff" />
    <circle cx="37" cy="39" r="4" fill="#fff" />
  </svg>
);

const Arrow: React.FC = () => (
  <svg className="mx-[34px] w-[18px]" viewBox="0 0 18 30" aria-hidden="true">
    <path d="M3 3l11 12L3 27" fill="none" stroke="#75797d" strokeWidth="5" />
  </svg>
);

const MetroLogo: React.FC = () => (
  <span className="flex h-[70px] w-[70px] items-center justify-center rounded-xl bg-[#cc3300] text-[62px] leading-[70px] font-bold text-white">M</span>
);

const SuburbanLogo: React.FC = () => (
  <svg className="w-[70px]" viewBox="0 0 70 54" aria-hidden="true">
    <path d="M10 7c1-5 4-7 8-7h44c6 0 9 4 8 9l-9 38c-1 5-4 7-8 7H42c4-5 4-12 1-20C37 20 25 11 10 7z" fill="#00793f" />
    <path d="M5 22c8 3 14 2 22 0 8 7 14 15 14 23 0 4-2 7-6 7-13 0-24-2-35-8z" fill="#da1d16" />
  </svg>
);

const RouteItem: React.FC<{
  logo: React.ReactNode;
  line: string;
  lineClass: string;
  walk: string;
  duration: string;
  time: string;
}> = ({ logo, line, lineClass, walk, duration, time }) => (
  <>
    <div className="flex h-[70px] items-center pl-[11px]">
      <TrainIcon />
      <span className="flex h-[70px] items-center rounded-[20px] bg-[#006833] px-6 text-[48px] font-bold text-white">Trenord</span>
      <Arrow />
      {logo}
      <span className={`ml-[10px] flex h-[70px] items-center rounded-[20px] px-[21px] text-[48px] font-bold text-black ${lineClass}`}>{line}</span>
      <Arrow />
      <span className="flex items-end text-[#3c4043]">
        <MdDirectionsWalk className="h-[70px] w-[70px]" />
        <span className="-ml-2 text-[34px] leading-[32px]">{walk}</span>
      </span>
      <span className="ml-auto self-end text-[62px] leading-[48px] font-medium text-[#1f1f1f]">{duration}</span>
    </div>
    <p className="mt-[57px] text-[51px] leading-[60px] text-[#3f4145]">{time}</p>
  </>
);

const DirectionsSheet: React.FC = () => (
  <section className="relative overflow-hidden rounded-t-[84px] bg-white pt-7 shadow-[0_-6px_24px_rgba(0,0,0,0.12)]">
    <div className="mx-auto h-3.5 w-[140px] rounded-full bg-[#c4c4c4]" />
    <div className="mt-7 flex items-center px-[70px]">
      <h1 className="pt-4 text-[78px] leading-[96px] text-[#1f1f1f]">Trasporto pubblico</h1>
      <button aria-label="Filtri" className="ml-auto flex h-28 w-28 items-center justify-center rounded-full bg-[#f1f1f1]">
        <svg className="w-12" viewBox="0 0 48 44" fill="none" stroke="#1f1f1f" strokeWidth="4" aria-hidden="true">
          <path d="M8 1v15M8 22v21M0 22h16M24 1v11M16 12h16M24 17v26M40 1v27M40 33v10M32 33h16" />
        </svg>
      </button>
      <button aria-label="Chiudi" className="ml-14 flex h-28 w-28 items-center justify-center rounded-full bg-[#f1f1f1] text-[#1f1f1f]">
        <MdClose className="h-[62px] w-[62px]" />
      </button>
    </div>

    <nav className="flex h-[214px] items-stretch gap-32 overflow-hidden border-b-4 border-[#dadce0] pt-6 pl-[57px] text-[48px] font-medium whitespace-nowrap text-[#5e5e5e]">
      <button className="flex items-center gap-4"><MdOutlineDirectionsCar className="h-[62px] w-[62px]" />55 min</button>
      <button className="relative flex items-center gap-6 text-[#0b57d0]">
        <TransitTabIcon />57 min
        <span className="absolute inset-x-0 bottom-0 h-[11px] rounded-t-[10px] bg-[#0b57d0]" />
      </button>
      <button className="flex items-center gap-4"><MdDirectionsWalk className="h-[64px] w-[64px]" />9 h</button>
      <button className="flex items-center gap-4"><MdDirectionsBike className="h-[63px] w-[63px]" />2 h 43</button>
    </nav>

    <div className="mt-[42px] flex h-28 items-center overflow-hidden pl-[70px] text-[51px] font-medium whitespace-nowrap">
      <button aria-label="Aggiorna" className="shrink-0 text-[#3c4043]"><MdRefresh className="h-[84px] w-[84px]" /></button>
      <button className="ml-[42px] flex h-28 shrink-0 items-center rounded-[28px] bg-[#d3e3fd] px-[43px] text-[#041e49]">
        Arrivo: lun 19 mag, 07:35
        <svg className="ml-6 w-[34px]" viewBox="0 0 34 18" aria-hidden="true"><path d="M0 0h34L17 18z" fill="#041e49" /></svg>
      </button>
      <button className="ml-7 flex h-28 shrink-0 items-center rounded-[28px] border-4 border-[#c4c6c8] px-[40px] text-[#1f1f1f]">
        Modalità
        <svg className="ml-6 w-[34px]" viewBox="0 0 34 18" aria-hidden="true"><path d="M0 0h34L17 18z" fill="#1f1f1f" /></svg>
      </button>
    </div>

    <ul className="mx-[70px] mt-[84px]">
      <li className="border-b-4 border-[#dadce0] pb-[58px]">
        <RouteItem logo={<MetroLogo />} line="2" lineClass="bg-[#629433]" walk="5" duration="57 min" time="06:28 (lunedì) – 07:24" />
        <p className="mt-[34px] text-[44px] leading-[50px] text-[#70757a]">Orario previsto: 06:28 da Gallarate</p>
      </li>
      <li className="pt-14">
        <RouteItem logo={<SuburbanLogo />} line="S6" lineClass="bg-[#f0d80c]" walk="11" duration="55 min" time="06:28 (lunedì) – 07:22" />
      </li>
    </ul>
    <div className="mx-auto mt-3 mb-[25px] h-3.5 w-[420px] rounded-full bg-[#6b6064]" />
  </section>
);

export default function App() {
  return (
    <main className="relative flex min-h-screen flex-col overflow-hidden font-[Roboto,sans-serif]">
      <TransitMap />
      <div className="relative flex flex-1 flex-col pt-6">
        <StatusBar />
        <DirectionsCard />
        <div className="flex flex-1 flex-col items-end justify-between pt-[59px] pr-[54px] pb-14">
          <button aria-label="Livelli" className="flex h-[140px] w-[140px] items-center justify-center rounded-full bg-white shadow-[0_3px_10px_rgba(0,0,0,0.3)]">
            <svg className="w-16" viewBox="0 0 64 68" fill="none" stroke="#3c4043" strokeWidth="7" aria-hidden="true">
              <path d="M32 5L58 26L32 46L6 26zM3 41l29 23 29-23" />
            </svg>
          </button>
          <button aria-label="La mia posizione" className="flex h-[196px] w-[196px] items-center justify-center rounded-full bg-white shadow-[0_3px_10px_rgba(0,0,0,0.3)]">
            <svg className="w-[76px]" viewBox="0 0 76 76" fill="none" stroke="#ea4335" aria-hidden="true">
              <circle cx="38" cy="38" r="28" strokeWidth="7" />
              <path d="M38 0v10M38 66v10M0 38h10M66 38h10" strokeWidth="7" />
              <path d="M31 33c0-10 14-9 14-1 0 5-7 6-7 12" strokeWidth="5" />
              <circle cx="38" cy="50" r="3" fill="#ea4335" stroke="none" />
            </svg>
          </button>
        </div>
      </div>
      <DirectionsSheet />
      <EdgeGlow />
    </main>
  );
}
